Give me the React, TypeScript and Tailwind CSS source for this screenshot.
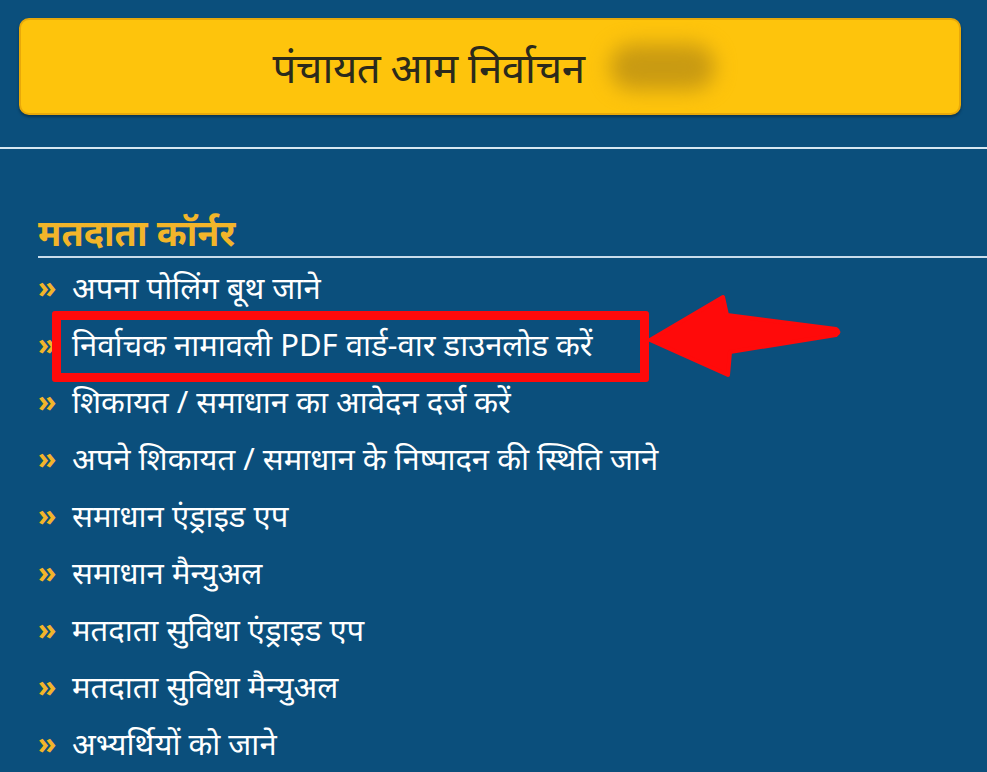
const items = [
  'अपना पोलिंग बूथ जाने',
  'निर्वाचक नामावली PDF वार्ड-वार डाउनलोड करें',
  'शिकायत / समाधान का आवेदन दर्ज करें',
  'अपने शिकायत / समाधान के निष्पादन की स्थिति जाने',
  'समाधान एंड्राइड एप',
  'समाधान मैन्युअल',
  'मतदाता सुविधा एंड्राइड एप',
  'मतदाता सुविधा मैन्युअल',
  'अभ्यर्थियों को जाने',
];

export default function App() {
  return (
    <div
      className="relative w-[987px] h-[772px] overflow-hidden bg-[#0b4f7c]"
      style={{ fontFamily: '"Noto Sans", "Noto Sans Devanagari", "Lato", sans-serif' }}
    >
      <div className="pt-[18px] px-[19px] pr-[26px]">
        <div className="h-[97px] rounded-[10px] bg-[#fec40c] border-2 border-[#e8a90a] shadow-[0_2px_3px_rgba(0,0,0,0.35)] flex items-center justify-center gap-[26px] pl-[8px]">
          <span className="text-[42px] text-[#2b2a1c] tracking-[-0.5px] leading-none">पंचायत आम निर्वाचन</span>
          <span className="w-[105px] h-[46px] rounded-full bg-[#c99a12] blur-[10px]" />
        </div>
      </div>

      <div className="mt-[32px] h-[2px] bg-[#d6e7f2]" />

      <div className="pl-[38px] pt-[64px]">
        <div className="text-[36px] font-bold text-[#f2b52a] leading-[40px]">मतदाता कॉर्नर</div>
        <div className="mt-[3px] h-[2px] bg-[#c9dceb]" />
        <ul className="mt-[1px]">
          {items.map((t) => (
            <li key={t} className="h-[57px] flex items-center gap-[16px] text-white">
              <span className="text-[#f2b52a] text-[30px] font-bold leading-none w-[18px] -mt-[2px]">»</span>
              <span className="text-[31px] leading-none">{t}</span>
            </li>
          ))}
        </ul>
      </div>

      <div className="absolute left-[52px] top-[311px] w-[597px] h-[71px] border-[9px] border-[#ff0a0a] rounded-[3px]" />

      <svg className="absolute left-0 top-0" width="987" height="772" viewBox="0 0 987 772">
        <path
          d="M650 340 L723 297 L727 315 L836 329 Q841 332 836 335 L730 352 L728 375 Z"
          fill="#ff0a0a"
          stroke="#ff0a0a"
          strokeWidth="4"
          strokeLinejoin="round"
        />
      </svg>
    </div>
  );
}
